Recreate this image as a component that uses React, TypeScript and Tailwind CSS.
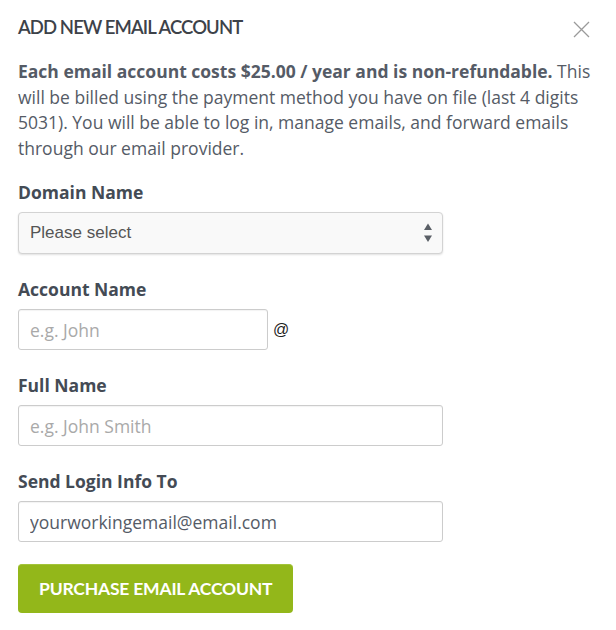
import { useState } from 'react';

const body = { fontFamily: '"Open Sans", "Liberation Sans", sans-serif' };
const brand = { fontFamily: 'Lato, "Open Sans", sans-serif' };

function Field({ label, children }: { label: string; children: React.ReactNode }) {
  return (
    <div className="mt-[23px] first:mt-0">
      <label className="block text-[17.5px] font-bold leading-[24px] text-[#444b55]">{label}</label>
      <div className="mt-[8px]">{children}</div>
    </div>
  );
}

export default function App() {
  const [domain, setDomain] = useState('');
  const [account, setAccount] = useState('');
  const [fullName, setFullName] = useState('');
  const [sendTo, setSendTo] = useState('yourworkingemail@email.com');

  const inputCls =
    'h-[41px] rounded-[3px] border border-[#cccccc] bg-white px-[11px] text-[17.5px] text-[#555b66] placeholder:text-[#a9a9a9] shadow-[inset_0_1px_1px_rgba(0,0,0,0.05)] outline-none';

  return (
    <div className="min-h-screen bg-white px-[18px] pt-[14px] text-[#555b66]" style={body}>
      <div className="flex items-start justify-between">
        <h2 className="text-[18.5px] font-semibold leading-[26px] tracking-[-0.9px] text-[#3d4249]" style={brand}>
          ADD NEW EMAIL ACCOUNT
        </h2>
        <button className="mr-[8px] mt-[7px] text-[#9a9a9a]" aria-label="Close">
          <svg width="17" height="17" viewBox="0 0 17 17" fill="none" stroke="currentColor" strokeWidth="1.3">
            <path d="M1 1L16 16M16 1L1 16" />
          </svg>
        </button>
      </div>

      <p className="mt-[19px] text-[17.5px] leading-[25.5px]">
        <strong className="font-bold">Each email account costs $25.00 / year and is non-refundable.</strong> This
        will be billed using the payment method you have on file (last 4 digits 5031). You will be able to log in,
        manage emails, and forward emails through our email provider.
      </p>

      <div className="mt-[19px] flex flex-col">
        <Field label="Domain Name">
          <div className="relative w-[425px]">
            <select
              value={domain}
              onChange={(e) => setDomain(e.target.value)}
              className="h-[42px] w-full appearance-none rounded-[4px] border border-[#d3d3d3] bg-[#f9f9f9] pl-[11px] pr-8 text-[17px] text-[#555555] shadow-[0_1px_2px_rgba(0,0,0,0.12)] outline-none"
              style={{ fontFamily: '"Liberation Sans", Arial, sans-serif' }}
            >
              <option value="">Please select</option>
            </select>
            <svg
              className="pointer-events-none absolute right-[10px] top-[11px]"
              width="10"
              height="20"
              viewBox="0 0 10 20"
              fill="#5a5f66"
            >
              <path d="M5 0.5L9 7H1z" />
              <path d="M5 19L9 12.5H1z" />
            </svg>
          </div>
        </Field>

        <Field label="Account Name">
          <div className="flex items-center gap-[5px]">
            <input
              value={account}
              onChange={(e) => setAccount(e.target.value)}
              placeholder="e.g. John"
              className={`${inputCls} w-[250px]`}
            />
            <span className="text-[16px] text-[#222]" style={{ fontFamily: '"Liberation Sans", Arial, sans-serif' }}>
              @
            </span>
          </div>
        </Field>

        <Field label="Full Name">
          <input
            value={fullName}
            onChange={(e) => setFullName(e.target.value)}
            placeholder="e.g. John Smith"
            className={`${inputCls} w-[425px]`}
          />
        </Field>

        <Field label="Send Login Info To">
          <input value={sendTo} onChange={(e) => setSendTo(e.target.value)} className={`${inputCls} w-[425px]`} />
        </Field>
      </div>

      <button
        className="mt-[22px] h-[49px] rounded-[4px] border-t border-[#a3c43a] bg-[#93b71a] px-[21px] text-[17.5px] font-bold tracking-[-0.2px] text-white"
        style={brand}
      >
        PURCHASE EMAIL ACCOUNT
      </button>
    </div>
  );
}
